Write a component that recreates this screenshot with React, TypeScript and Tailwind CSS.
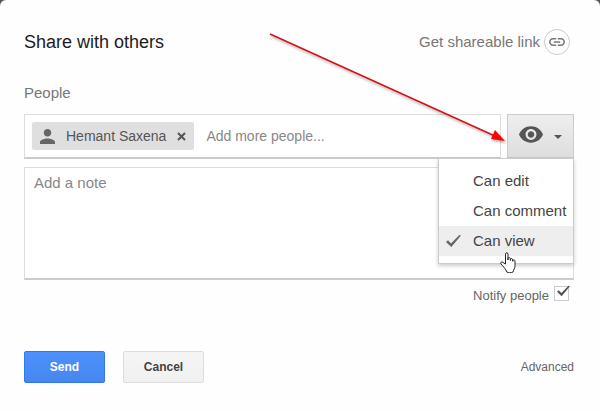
import { useState } from "react";

const ACCESS_LEVELS = ["Can edit", "Can comment", "Can view"];

function PersonIcon() {
  return (
    <svg viewBox="4 4 16 16" className="size-[15px] fill-[#666]" aria-hidden="true">
      <path d="M12 12c2.21 0 4-1.79 4-4s-1.79-4-4-4-4 1.79-4 4 1.79 4 4 4zm0 2c-2.67 0-8 1.34-8 4v2h16v-2c0-2.66-5.33-4-8-4z" />
    </svg>
  );
}

function LinkIcon() {
  return (
    <svg viewBox="2 7 20 10" className="h-2 w-4 fill-[#777]" aria-hidden="true">
      <path d="M3.9 12c0-1.71 1.39-3.1 3.1-3.1h4V7H7c-2.76 0-5 2.24-5 5s2.24 5 5 5h4v-1.9H7c-1.71 0-3.1-1.39-3.1-3.1zM8 13h8v-2H8v2zm9-6h-4v1.9h4c1.71 0 3.1 1.39 3.1 3.1s-1.39 3.1-3.1 3.1h-4V17h4c2.76 0 5-2.24 5-5s-2.24-5-5-5z" />
    </svg>
  );
}

function EyeIcon() {
  return (
    <svg viewBox="1 4.5 22 15" className="h-[17px] w-6 fill-[#555]" aria-hidden="true">
      <path d="M12 4.5C7 4.5 2.73 7.61 1 12c1.73 4.39 6 7.5 11 7.5s9.27-3.11 11-7.5c-1.73-4.39-6-7.5-11-7.5zM12 17c-2.76 0-5-2.24-5-5s2.24-5 5-5 5 2.24 5 5-2.24 5-5 5zm0-8c-1.66 0-3 1.34-3 3s1.34 3 3 3 3-1.34 3-3-1.34-3-3-3z" />
    </svg>
  );
}

function CheckIcon({ className }: { className: string }) {
  return (
    <svg viewBox="0 0 15 12" className={className} aria-hidden="true">
      <path d="M0 7 2 5.200 5 8.400 13.300 0 15 .6 5.300 12Z" />
    </svg>
  );
}

function HandCursor() {
  return (
    <svg
      viewBox="0 0 16 21"
      className="pointer-events-none absolute top-[26px] left-[61px] z-10 h-[21px] w-4 fill-white stroke-[#222]"
      aria-hidden="true"
    >
      <path
        d="M5.500 12V2.200C5.500.3 8 .3 8 2.200V8v-1.500c0-1.400 2.400-1.200 2.400.3V8.500v-1c0-1.300 2.300-1.100 2.300.3v1.500-.6c0-1.200 2.300-1 2.300.4v4.400c0 3-1.500 4-2 6.500-2 1-4.500 1-6.200 0C6 17 3 14.500 1 11.800c-1-1.500.8-2.500 2-1.400Z"
        strokeWidth="1"
        strokeLinejoin="round"
      />
    </svg>
  );
}

function PointerArrow() {
  return (
    <svg
      viewBox="0 0 240 112"
      className="pointer-events-none absolute right-0 bottom-3.5 h-28 w-60 drop-shadow-[1px_2px_1px_rgba(0,0,0,0.3)]"
      aria-hidden="true"
    >
      <path d="M3 1 230 104" stroke="#d80f14" strokeWidth="1.600" />
      <path d="M238 108 224 106 228 97Z" fill="#f00" />
    </svg>
  );
}

export default function App() {
  const [access, setAccess] = useState("Can view");
  const [open, setOpen] = useState(true);

  return (
    <div className="bg-[#555] font-['Liberation_Sans',Arial,sans-serif] text-[#666]">
      <main className="flex min-h-screen flex-col rounded-t-md bg-[#fefefe] pt-7 pr-[26px] pb-7 pl-6">
        <header className="flex items-center justify-between">
          <h1 className="text-[18px] leading-7 text-[#1c1c1c]">Share with others</h1>
          <button type="button" className="mr-1 flex items-center gap-1 text-[15px] text-[#777]">
            Get shareable link
            <span className="flex size-[26px] items-center justify-center rounded-full border border-[#ccc]">
              <LinkIcon />
            </span>
          </button>
        </header>

        <label htmlFor="people" className="mt-[23px] self-start text-[15px] leading-7 text-[#777]">
          People
        </label>

        <div className="mt-[7px] flex gap-[6px]">
          <div className="flex h-[45px] min-w-0 grow items-center gap-3 border border-b-2 border-[#ddd] border-b-[#ccc] bg-white px-[7px]">
            <span className="flex h-7 shrink-0 items-center rounded-xs bg-[#dfdfdf] px-2 text-[14px] text-[#555]">
              <PersonIcon />
              <span className="mx-[11px]">Hemant Saxena</span>
              <button type="button" aria-label="Remove Hemant Saxena">
                <svg viewBox="0 0 9 9" className="size-[9px] stroke-[#555]" aria-hidden="true">
                  <path d="M1 1 8 8M8 1 1 8" strokeWidth="2" />
                </svg>
              </button>
            </span>
            <input
              id="people"
              placeholder="Add more people..."
              className="min-w-0 grow text-[14px] outline-none placeholder:text-[#888]"
            />
          </div>

          <div className="relative shrink-0">
            <button
              type="button"
              aria-label="Access level"
              aria-haspopup="menu"
              aria-expanded={open}
              onClick={() => setOpen(!open)}
              className="flex h-11 w-[67px] items-center justify-between border border-[#ccc] bg-linear-to-b from-[#eee] to-[#dedede] px-[11px] pb-1"
            >
              <EyeIcon />
              <svg viewBox="0 0 8 4" className="mt-1.5 h-1 w-2 fill-[#555]" aria-hidden="true">
                <path d="M0 0h8L4 4Z" />
              </svg>
            </button>
            <div className="absolute right-full bottom-0">
              <PointerArrow />
            </div>
            {open && (
              <div
                role="menu"
                className="absolute top-11 right-0 z-10 w-[136px] border border-[#ccc] bg-white py-[7px] shadow-[0_2px_4px_rgba(0,0,0,0.2)]"
              >
                {ACCESS_LEVELS.map((level) => (
                  <button
                    key={level}
                    type="button"
                    role="menuitemradio"
                    aria-checked={level === access}
                    onClick={() => setAccess(level)}
                    className="relative flex h-[30px] w-full items-center pl-[34px] text-left text-[15px] whitespace-nowrap text-[#444] aria-checked:bg-[#eee]"
                  >
                    {level === access && (
                      <>
                        <CheckIcon className="absolute left-[7px] h-3 w-[15px] fill-[#666]" />
                        <HandCursor />
                      </>
                    )}
                    {level}
                  </button>
                ))}
              </div>
            )}
          </div>
        </div>

        <textarea
          aria-label="Add a note"
          placeholder="Add a note"
          className="mt-2 h-[113px] w-full resize-none border border-b-2 border-[#ddd] border-b-[#ccc] bg-white px-[9px] py-[3px] text-[15px] leading-6 outline-none placeholder:text-[#888]"
        />

        <label className="mt-[6px] mr-[5px] flex items-start gap-[5px] self-end text-[13px] leading-5">
          Notify people
          <span className="relative flex">
            <input
              type="checkbox"
              defaultChecked
              className="peer size-[15px] appearance-none border border-[#ccc] bg-white"
            />
            <CheckIcon className="pointer-events-none absolute -top-px left-[3px] hidden h-3 w-[13px] fill-[#555] peer-checked:block" />
          </span>
        </label>

        <footer className="mt-auto flex items-center text-[12px]">
          <button
            type="button"
            className="h-8 w-[81px] rounded-xs border border-[#3079ed] bg-linear-to-b from-[#4d90fe] to-[#4787ed] font-bold text-white"
          >
            Send
          </button>
          <button
            type="button"
            className="ml-[18px] h-8 w-[81px] rounded-xs border border-[#dcdcdc] bg-linear-to-b from-[#f5f5f5] to-[#f1f1f1] font-bold text-[#444]"
          >
            Cancel
          </button>
          <a href="#advanced" className="ml-auto">
            Advanced
          </a>
        </footer>
      </main>
    </div>
  );
}
